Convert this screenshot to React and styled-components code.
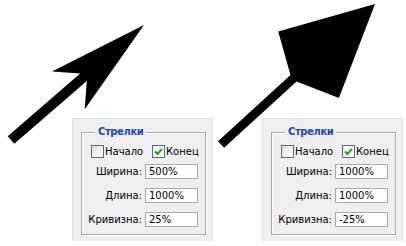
import React from "react";
import styled, { createGlobalStyle } from "styled-components";

const GlobalStyle = createGlobalStyle`
  html, body { margin: 0; padding: 0; background: #fff; }
  body { font-family: "DejaVu Sans", "Liberation Sans", sans-serif; }
`;

const Canvas = styled.div`
  position: relative;
  width: 406px;
  height: 246px;
  overflow: hidden;
  background: #fff;
`;

const ArrowLayer = styled.svg`
  position: absolute;
  left: 0;
  top: 0;
  width: 406px;
  height: 246px;
`;

const PanelRow = styled.div`
  position: relative;
  display: flex;
  gap: 49px;
  padding: 118px 0 0 72px;
`;

const Panel = styled.div`
  box-sizing: border-box;
  width: 141px;
  flex-shrink: 0;
  background: #efefef;
  border: 1px solid #e2e2e2;
  border-bottom: none;
  padding: 13px 6px 6px 8px;
`;

const GroupBox = styled.div`
  position: relative;
  border: 1px solid #a9a9a9;
  box-shadow: inset 1px 1px 0 #fff, 1px 1px 0 #fff;
  padding: 12px 0 7px 0;
`;

const Legend = styled.span`
  position: absolute;
  top: -7px;
  left: 13px;
  padding: 0 3px;
  background: #efefef;
  color: #1848c4;
  font-weight: bold;
  font-size: 10px;
  letter-spacing: -0.4px;
  line-height: 12px;
`;

const CheckRow = styled.div`
  display: flex;
  padding-left: 9px;
  height: 13px;
`;

const CheckItem = styled.label`
  display: flex;
  flex-shrink: 0;
  align-items: center;
  gap: 1px;
  width: ${(p) => p.$w || "auto"};
  font-size: 10px;
  line-height: 13px;
  color: #000;
`;

const Box = styled.span`
  box-sizing: border-box;
  flex-shrink: 0;
  width: 13px;
  height: 13px;
  border: 1px solid #5a6878;
  background: ${(p) =>
    p.$checked
      ? "linear-gradient(135deg, #f4f4f0 0%, #ffffff 100%)"
      : "linear-gradient(135deg, #dcdcd7 0%, #f4f4f2 60%, #ffffff 100%)"};
  display: flex;
  align-items: center;
  justify-content: center;
`;

const Fields = styled.div`
  display: grid;
  grid-template-columns: 60px 53px;
  column-gap: 3px;
  row-gap: 9px;
  margin-top: 6px;
`;

const FieldLabel = styled.span`
  text-align: right;
  font-size: 10px;
  line-height: 15px;
  color: #000;
  white-space: nowrap;
`;

const Input = styled.div`
  box-sizing: border-box;
  height: 15px;
  background: #fff;
  border: 1px solid #a7abb0;
  padding-left: 3px;
  font-size: 10px;
  line-height: 13px;
  color: #000;
`;

const Check = () => (
  <svg width="9" height="9" viewBox="0 0 9 9">
    <path d="M1 4.5 L3.5 7 L8 1.8" fill="none" stroke="#22a022" strokeWidth="2" />
  </svg>
);

function ArrowPanel({ width, length, curve }) {
  return (
    <Panel>
      <GroupBox>
        <Legend>Стрелки</Legend>
        <CheckRow>
          <CheckItem $w="61px">
            <Box />
            Начало
          </CheckItem>
          <CheckItem>
            <Box $checked>
              <Check />
            </Box>
            Конец
          </CheckItem>
        </CheckRow>
        <Fields>
          <FieldLabel>Ширина:</FieldLabel>
          <Input>{width}</Input>
          <FieldLabel>Длина:</FieldLabel>
          <Input>{length}</Input>
          <FieldLabel>Кривизна:</FieldLabel>
          <Input>{curve}</Input>
        </Fields>
      </GroupBox>
    </Panel>
  );
}

export default function App() {
  return (
    <>
      <GlobalStyle />
      <Canvas>
        <ArrowLayer viewBox="0 0 406 246">
          <polygon
            fill="#000"
            points="7.7,136.2 80.2,73.5 52,71.5 144,25 84.7,109.3 86.8,81.1 14.3,143.8"
          />
          <polygon
            fill="#000"
            points="218,141.2 290.5,75 278.2,31.4 375,4 338.9,97.9 296.6,81.6 224.1,147.8"
          />
        </ArrowLayer>
        <PanelRow>
          <ArrowPanel width="500%" length="1000%" curve="25%" />
          <ArrowPanel width="1000%" length="1000%" curve="-25%" />
        </PanelRow>
      </Canvas>
    </>
  );
}
